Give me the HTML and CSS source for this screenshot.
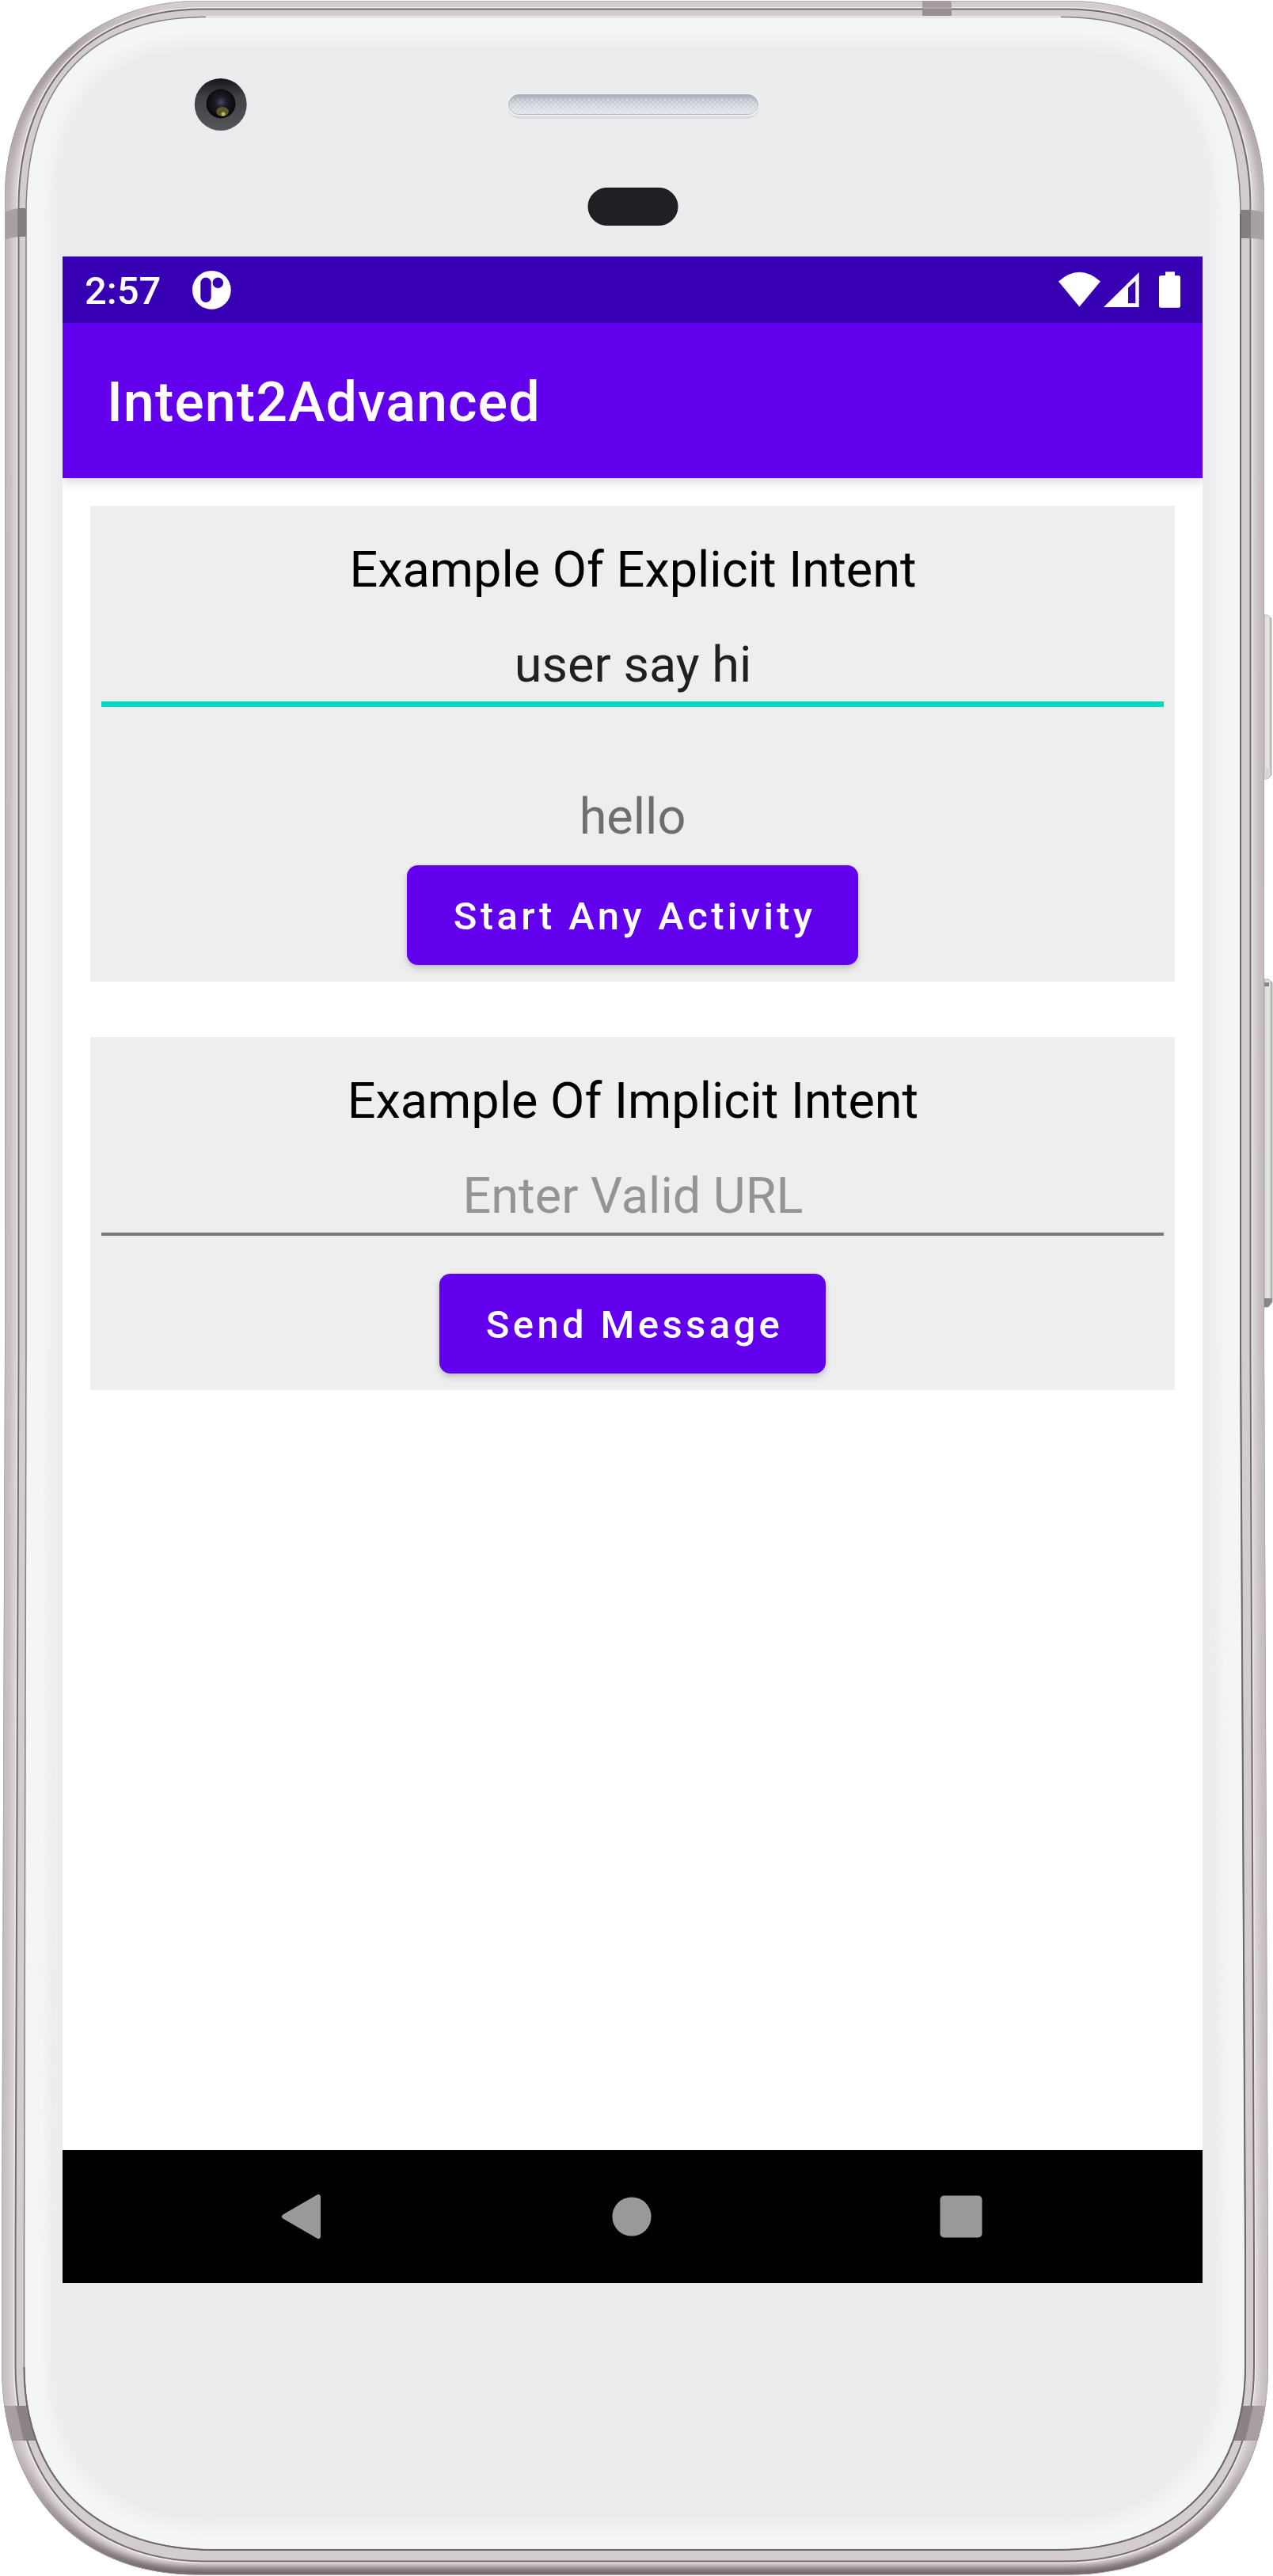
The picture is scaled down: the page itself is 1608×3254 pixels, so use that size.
FILE: index.html
```html
<!DOCTYPE html>
<html lang="en">
<head>
<meta charset="utf-8">
<title>Intent2Advanced</title>
<link rel="stylesheet" href="styles.css">
</head>
<body>
<div class="phone">
  <svg class="shell" viewBox="0 0 1608 3254" width="1608" height="3254" aria-hidden="true">
    <defs>
      <path id="body" d="M6 250C6 110 105 1 250 1H1353C1498 1 1597 110 1597 250V1700L1602 2850V2990C1602 3140 1508 3252.500 1350 3252.500H250C90 3252.500 2 3140 2 2990V2850L6 1700Z"/>
      <path id="rim" d="M23.500 262C23.500 114 106 11.500 256 11.500H1347C1497 11.500 1579.500 114 1579.500 262V1700L1584 2850V2990C1584 3130 1498 3235.500 1344 3235.500H260C108 3235.500 19.500 3130 19.500 2990V2850L23.500 1700Z"/>
      <path id="glass" d="M33 270C33 112 108 21.500 260 21.500H1340C1492 21.500 1567 112 1567 270V1700L1573 2850V2990C1573 3125 1490 3221 1335 3221H270C113 3221 30.500 3125 30.500 2990V2850L33 1700Z"/>
      <clipPath id="bodyClip"><use href="#body"/></clipPath>
      <clipPath id="glassClip"><use href="#glass"/></clipPath>
      <filter id="soft" x="-5%" y="-5%" width="110%" height="110%"><feGaussianBlur stdDeviation="8"/></filter>
      <filter id="edge" x="-5%" y="-5%" width="110%" height="110%"><feGaussianBlur stdDeviation="4"/></filter>
      <linearGradient id="corner" x1="0" y1="0" x2="0" y2="1">
        <stop offset="0" stop-color="#8b8186" stop-opacity=".1"/>
        <stop offset=".02" stop-color="#8b8186" stop-opacity=".75"/>
        <stop offset=".05" stop-color="#8b8186" stop-opacity=".55"/>
        <stop offset=".09" stop-color="#8b8186" stop-opacity=".35"/>
        <stop offset=".95" stop-color="#8b8186" stop-opacity=".3"/>
        <stop offset=".985" stop-color="#7d7378" stop-opacity=".8"/>
        <stop offset="1" stop-color="#6f656a"/>
      </linearGradient>
      <linearGradient id="speaker" x1="0" y1="0" x2="0" y2="1">
        <stop offset="0" stop-color="#a9acb6"/><stop offset=".5" stop-color="#d0d2d9"/><stop offset="1" stop-color="#e3e4e9"/>
      </linearGradient>
      <pattern id="mesh" width="6" height="6" patternUnits="userSpaceOnUse"><path d="M0 6L6 0M0 0l6 6" stroke="#eef0f4" stroke-opacity=".55" stroke-width="1"/></pattern>
      <radialGradient id="lens" cx=".5" cy=".45" r=".5">
        <stop offset="0" stop-color="#4a4868"/><stop offset=".35" stop-color="#1e1d2a"/><stop offset="1" stop-color="#08090b"/>
      </radialGradient>
      <linearGradient id="ring" x1="0" y1="0" x2="0" y2="1"><stop offset="0" stop-color="#15161a"/><stop offset=".35" stop-color="#414246"/><stop offset="1" stop-color="#55565a"/></linearGradient>
      <linearGradient id="key" x1="0" y1="0" x2="1" y2="0"><stop offset="0" stop-color="#b3b5b2"/><stop offset=".3" stop-color="#dfe3de"/><stop offset=".65" stop-color="#e4e8e3"/><stop offset="1" stop-color="#a3a5a4"/></linearGradient>
    </defs>
    <path d="M1596 777h5l5 4v198l-5 5h-5z" fill="url(#key)" stroke="#b0b2b0"/>
    <path d="M1596 971h9v8l-5 5h-4z" fill="#d4d5d4"/>
    <path d="M1596 1237h6l5 4v404l-5 6h-6z" fill="url(#key)" stroke="#a7a9a7"/>
    <path d="M1596 1241h7v5h-7zM1596 1640h11v4l-5 7h-6z" fill="#878886"/>
    <use href="#body" fill="#dfd8da"/>
    <g clip-path="url(#bodyClip)">
      <use href="#body" fill="none" stroke="url(#corner)" stroke-width="20" filter="url(#edge)"/>
      <use href="#body" fill="none" stroke="#a69da1" stroke-width="1.500"/>
      <use href="#rim" fill="#d2cbcd" stroke="#f0ebed" stroke-width="5"/>
      <use href="#rim" fill="#d3cdcf" stroke="#736b6e" stroke-width="2"/>
      <path d="M0 272Q12 264 24 263H34V299H24Q12 300 0 305ZM1608 272Q1592 266 1580 265H1566V301H1580Q1592 301 1608 307Z" fill="#a8a1a4"/>
      <path d="M22 263h12v36H22zM1567 265h13v36h-13z" fill="#857e81"/>
      <path d="M0 3039H60V3083H0ZM1540 3039H1608V3083H1540Z" fill="#a79fa3"/>
      <path d="M20 3039H60V3083H30ZM1583 3039H1540V3083H1573Z" fill="#8b8287"/>
      <path d="M1165 0h36q2 11 0 22h-36z" fill="#a59ca0"/>
      <path d="M1165 11h37v10h-37z" fill="#989094"/>
      <path d="M1165 10h37" stroke="#bbb3b6"/>
    </g>
    <use href="#glass" fill="#ebeced"/>
    <g clip-path="url(#glassClip)">
      <use href="#glass" fill="none" stroke="#f4f5f6" stroke-width="58" filter="url(#soft)"/>
    </g>
    <use href="#glass" fill="none" stroke="#858083" stroke-width="1.500"/>
    <path d="M1567 270V1700L1573 2850V2990C1573 3125 1490 3221 1335 3221H270C113 3221 30.500 3125 30.500 2990" fill="none" stroke="#6c676a" stroke-width="2"/>
    <path d="M260 21.500H1340" stroke="#e7e3e4" stroke-width="3"/>

    <circle cx="278.700" cy="132" r="33" fill="url(#ring)"/>
    <circle cx="279" cy="131" r="18.500" fill="url(#lens)"/>
    <ellipse cx="281" cy="141" rx="8" ry="6" fill="#70702e" opacity=".75"/>
    <circle cx="282" cy="144" r="2.500" fill="#c5b56a"/>

    <rect x="641" y="120" width="318" height="30" rx="15" fill="#dadbde"/>
    <rect x="641" y="118" width="318" height="28.500" rx="14" fill="#f6f7f9"/>
    <rect x="642.500" y="119.500" width="315" height="25" rx="12.500" fill="url(#speaker)" stroke="#b4b7c0"/>
    <rect x="643" y="124" width="314" height="20" rx="10" fill="url(#mesh)"/>
    <rect x="743" y="237.500" width="113" height="47" rx="23.500" fill="#1f2024" stroke="#101114"/>
  </svg>

  <main class="screen">
    <header class="status-bar">
      <span class="clock">2:57</span>
      <svg class="app-badge" viewBox="0 0 50 50" width="50" height="50"><circle cx="25.300" cy="25.300" r="24.400" fill="#fff"/><rect x="11.300" y="9.600" width="13.400" height="31.400" rx="6.700" fill="#3700b3"/><circle cx="33.300" cy="16.300" r="6.700" fill="#3700b3"/></svg>
      <svg class="signals" viewBox="0 0 156 48" width="156" height="48" fill="#fff">
        <path d="M0 13.500Q26.500-10 53 13.500L26.500 45.500Z"/>
        <path fill-rule="evenodd" d="M57 46L101.700 2V46ZM88 41H97.300V12.700L88 21.500Z"/>
        <path d="M135 1.300H147V6h4.500a2.500 2.500 0 0 1 2.500 2.500V44.200a2.500 2.500 0 0 1-2.500 2.500H129.500a2.500 2.500 0 0 1-2.500-2.500V8.500A2.500 2.500 0 0 1 129.500 6H135Z"/>
      </svg>
    </header>
    <div class="app-bar"><h1 class="app-title">Intent2Advanced</h1></div>
    <div class="content">
      <section class="card">
        <h2 class="card-title">Example Of Explicit Intent</h2>
        <div class="field field-focused">user say hi</div>
        <p class="reply">hello</p>
        <button class="button button-start">Start Any Activity</button>
      </section>
      <section class="card">
        <h2 class="card-title">Example Of Implicit Intent</h2>
        <div class="field field-empty">Enter Valid URL</div>
        <button class="button button-send">Send Message</button>
      </section>
    </div>
    <nav class="nav-bar">
      <svg viewBox="0 0 60 60" width="60" height="60"><path d="M8 30L51 5V55Z" fill="#999" stroke="#999" stroke-width="6" stroke-linejoin="round"/></svg>
      <svg viewBox="0 0 60 60" width="60" height="60"><circle cx="30" cy="30" r="24.600" fill="#999"/></svg>
      <svg viewBox="0 0 60 60" width="60" height="60"><rect x="3.500" y="3.500" width="53" height="53" rx="5" fill="#999"/></svg>
    </nav>
  </main>
</div>
</body>
</html>
```
FILE: styles.css
```css
* { box-sizing: border-box; }

body {
  margin: 0;
  background: #fff;
  font-family: Roboto, "Liberation Sans", sans-serif;
}

.phone {
  position: relative;
  width: 1608px;
  height: 3254px;
  padding: 324px 89px 370px 79px;
  overflow: hidden;
}

.shell {
  position: absolute;
  top: 0;
  left: 0;
}

.screen {
  position: relative;
  display: flex;
  flex-direction: column;
  width: 1440px;
  height: 2560px;
  background: #fff;
}

.status-bar {
  display: flex;
  align-items: center;
  flex: none;
  height: 84px;
  padding: 0 26px 0 28px;
  background: #3700b3;
  color: #fff;
}

.clock {
  width: 135px;
  padding-top: 4px;
  font-size: 49px;
  font-weight: 500;
  line-height: 80px;
}

.signals { margin-left: auto; }

.app-bar {
  display: flex;
  align-items: center;
  flex: none;
  height: 196px;
  padding: 4px 0 0 56px;
  background: #6200ee;
  box-shadow: 0 4px 14px rgba(0, 0, 0, .18);
  clip-path: inset(0 0 -30px 0);
  color: #fff;
}

.app-title {
  margin: 0;
  font-size: 70px;
  font-weight: 500;
  line-height: 82px;
  letter-spacing: 1.05px;
}

.content {
  display: flex;
  flex: 1;
  flex-direction: column;
  gap: 70px;
  padding: 35px;
}

.card {
  display: flex;
  flex-direction: column;
  align-items: center;
  padding: 44px 14px 21px;
  background: #eee;
  font-size: 63px;
}

.card-title {
  margin: 0;
  padding-left: 1px;
  color: #000;
  font-size: 63px;
  font-weight: 400;
  line-height: 74px;
}

.field {
  align-self: stretch;
  height: 136px;
  padding: 46px 0 0 1px;
  line-height: 74px;
  text-align: center;
}

.field-focused {
  border-bottom: 7px solid #03dac5;
  color: #202020;
}

.field-empty {
  height: 133px;
  border-bottom: 4px solid #7a7a7a;
  color: #949494;
}

.reply {
  margin: 0;
  padding: 102px 0 24px;
  color: #6e6e6e;
  line-height: 74px;
}

.button {
  height: 126px;
  padding: 4px 0 0 5px;
  border: 0;
  border-radius: 14px;
  background: #6200ee;
  box-shadow: 0 5px 8px rgba(0, 0, 0, .14), 0 1px 5px rgba(0, 0, 0, .1);
  color: #fff;
  font-family: inherit;
  font-size: 49px;
  font-weight: 500;
  letter-spacing: 4.375px;
  line-height: 58px;
}

.button-start { width: 570px; }

.button-send {
  width: 488px;
  margin-top: 48px;
}

.nav-bar {
  display: flex;
  align-items: center;
  justify-content: space-between;
  flex: none;
  height: 168px;
  padding: 0 275px 0 272px;
  background: #000;
}
```
